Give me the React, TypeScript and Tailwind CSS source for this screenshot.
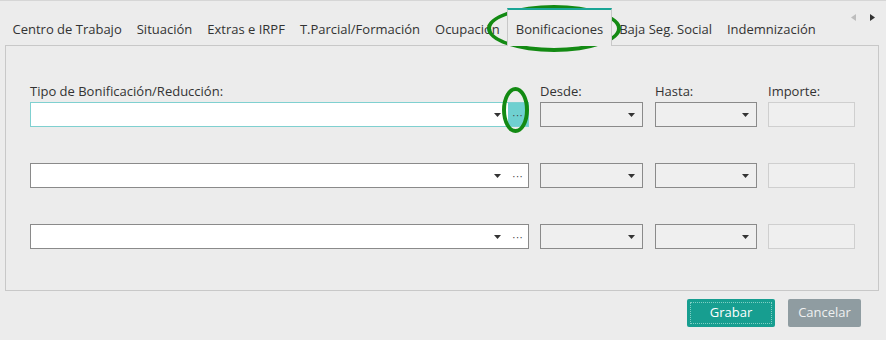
import React from 'react';

const tabs = [
  'Centro de Trabajo',
  'Situación',
  'Extras e IRPF',
  'T.Parcial/Formación',
  'Ocupación',
  'Bonificaciones',
  'Baja Seg. Social',
  'Indemnización',
];

function Caret() {
  return (
    <svg width="7" height="4" viewBox="0 0 7 4" className="shrink-0">
      <path d="M0 0 H7 L3.5 4 Z" fill="#333" />
    </svg>
  );
}

function Dots() {
  return <span className="text-[10px] leading-none tracking-[1px] text-[#444]">···</span>;
}

function TypeInput({ focused }: { focused?: boolean }) {
  return (
    <div
      className={`flex h-[25px] w-[499px] items-stretch bg-white border ${
        focused ? 'border-[#7fd0d0]' : 'border-[#8a8a8a]'
      }`}
    >
      <div className="flex-1" />
      <div className="flex w-[21px] items-center justify-center">
        <Caret />
      </div>
      <div
        className={`flex w-[20px] items-center justify-center ${focused ? 'bg-[#6fd0d0]' : ''}`}
      >
        <Dots />
      </div>
    </div>
  );
}

function DateSelect({ w }: { w: string }) {
  return (
    <div className={`flex h-[25px] ${w} items-center justify-end border border-[#8a8a8a] bg-[#efefef] pr-[7px]`}>
      <Caret />
    </div>
  );
}

function Label({ children }: { children: React.ReactNode }) {
  return <span className="mb-[3px] text-[13px] leading-[16px] text-[#333]">{children}</span>;
}

function Row({ first }: { first?: boolean }) {
  return (
    <div className="flex items-end">
      <div className="flex flex-col">
        {first && <Label>Tipo de Bonificación/Reducción:</Label>}
        <TypeInput focused={first} />
      </div>
      <div className="ml-[11px] flex flex-col">
        {first && <Label>Desde:</Label>}
        <DateSelect w="w-[103px]" />
      </div>
      <div className="ml-[12px] flex flex-col">
        {first && <Label>Hasta:</Label>}
        <DateSelect w="w-[102px]" />
      </div>
      <div className="ml-[11px] flex flex-col">
        {first && <Label>Importe:</Label>}
        <div className="h-[25px] w-[87px] border border-[#cfcfcf] bg-[#efefef]" />
      </div>
    </div>
  );
}

export default function App() {
  return (
    <div
      className="relative h-[340px] w-[886px] overflow-hidden bg-[#ececec] border-t border-[#d6d6d6]"
      style={{ fontFamily: '"Open Sans", "Noto Sans", sans-serif' }}
    >
      {/* Tab strip */}
      <div className="flex h-[44px] items-end pl-[5px]">
        {tabs.map((t) => {
          const active = t === 'Bonificaciones';
          return (
            <div
              key={t}
              className={`relative flex h-[37px] items-end px-[7.5px] pb-[7px] text-[13px] leading-[18px] text-[#333] ${
                active
                  ? 'z-10 -mb-px h-[38px] border-x border-t-2 border-x-[#c8c8c8] border-t-[#1aa596] bg-[#ececec] pb-[8px]'
                  : ''
              }`}
            >
              <span className="whitespace-nowrap">{t}</span>
            </div>
          );
        })}
        <div className="ml-auto mb-[24px] mr-[11px] flex gap-[14px]">
          <svg width="5" height="7" viewBox="0 0 5 7">
            <path d="M5 0 V7 L0 3.5 Z" fill="#bdbdbd" />
          </svg>
          <svg width="5" height="7" viewBox="0 0 5 7">
            <path d="M0 0 V7 L5 3.5 Z" fill="#333" />
          </svg>
        </div>
      </div>

      {/* Panel */}
      <div className="mx-[5px] mr-[7px] flex h-[246px] flex-col gap-[36px] border border-[#c8c8c8] pl-[24px] pt-[37px]">
        <Row first />
        <Row />
        <Row />
      </div>

      {/* Buttons */}
      <div className="mr-[25px] mt-[8px] flex justify-end gap-[13px]">
        <button className="flex h-[28px] w-[88px] items-center justify-center rounded-[2px] bg-[#179e90] p-[3px]">
          <span className="flex h-full w-full items-center justify-center border border-dotted border-[#7fcfc4] text-[13px] text-white">
            Grabar
          </span>
        </button>
        <button className="flex h-[28px] w-[73px] items-center justify-center rounded-[2px] bg-[#8f9ca1] text-[13px] text-[#eef0f0]">
          Cancelar
        </button>
      </div>

      {/* Annotation ellipses */}
      <div className="pointer-events-none absolute left-[487px] top-[4px] h-[47px] w-[134px] rounded-[50%] border-[4px] border-[#138a13]" />
      <div className="pointer-events-none absolute left-[502px] top-[86px] h-[46px] w-[27px] rounded-[50%] border-[4px] border-[#138a13]" />
    </div>
  );
}
